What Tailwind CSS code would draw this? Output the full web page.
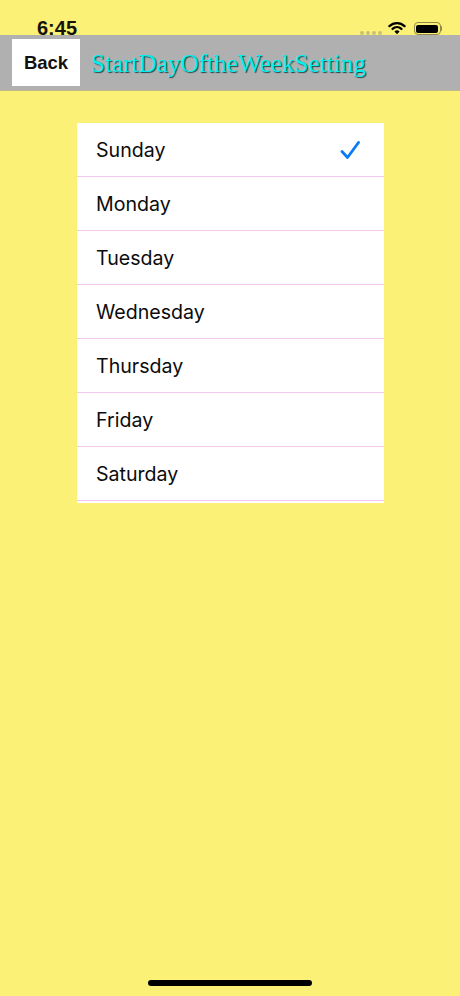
<!DOCTYPE html>
<html lang="en">
<head>
    <meta charset="UTF-8">
    <meta name="viewport" content="width=device-width, initial-scale=1.0">
    <title>StartDayOftheWeekSetting</title>
    <script src="https://cdn.jsdelivr.net/npm/@tailwindcss/browser@4"></script>
</head>
<body>
    <div class="relative w-[460px] h-[996px] overflow-hidden bg-[#fbf176] font-['Inter',sans-serif] flex flex-col">
        <!-- Status bar -->
        <div class="h-[35px] flex justify-between items-end pl-[37px] pr-[18px] relative z-10">
            <span class="text-[20px] leading-[20px] font-bold text-[#14140a] font-['Liberation_Sans',sans-serif] translate-y-[3px]">6:45</span>
            <div class="flex items-end">
                <div class="flex gap-[2px] mr-[6px]">
                    <span class="w-[4px] h-[4px] rounded-full bg-[#c9c275]"></span>
                    <span class="w-[4px] h-[4px] rounded-full bg-[#c9c275]"></span>
                    <span class="w-[4px] h-[4px] rounded-full bg-[#c9c275]"></span>
                    <span class="w-[4px] h-[4px] rounded-full bg-[#c9c275]"></span>
                </div>
                <svg width="18" height="14" viewBox="0 0 19 14" class="mr-[8px]">
                    <path d="M1.5 5 A11.5 11.5 0 0 1 17.5 5" fill="none" stroke="#000" stroke-width="2.4" stroke-linecap="round"/>
                    <path d="M4.8 8 A7 7 0 0 1 14.2 8" fill="none" stroke="#000" stroke-width="2.4" stroke-linecap="round"/>
                    <path d="M9.5 13.5 L6.8 10.6 A4 4 0 0 1 12.2 10.6 Z" fill="#000"/>
                </svg>
                <div class="flex items-center">
                    <div class="w-[27px] h-[13px] rounded-[4px] border border-[#8f8a45] p-[1.5px]">
                        <div class="w-full h-full rounded-[2px] bg-black"></div>
                    </div>
                    <div class="w-[1.5px] h-[5px] bg-[#8f8a45] rounded-r-sm"></div>
                </div>
            </div>
        </div>

        <!-- Nav bar -->
        <div class="h-[56px] bg-[#b0b0b0] border-b border-[#bfb98a] flex items-center pl-[12px]">
            <div class="w-[68px] h-[47px] bg-white flex items-center justify-center pt-[1px] text-[18.5px] font-bold text-[#111] font-['Liberation_Sans',sans-serif]">Back</div>
            <div class="ml-[11px] mt-[3px] text-[25.2px] leading-[30px] text-[#00f0ec] font-['Liberation_Serif',serif] [text-shadow:1px_1px_1px_#1a4448]">StartDayOftheWeekSetting</div>
        </div>

        <!-- Day list -->
        <div class="w-[307px] ml-[77px] mt-[32px] bg-white text-[19.6px] text-[#0c0c0c]">
            <div class="h-[54px] border-b border-[#f3c8ee] pl-[19px] pr-[24px] flex items-center justify-between">
                <span class="pt-[3px]">Sunday</span>
                <svg width="20" height="20" viewBox="0 0 20 20">
                    <path d="M2 11.5 L7.5 17.5 L18.5 2.5" fill="none" stroke="#0a7af5" stroke-width="2.8" stroke-linecap="round" stroke-linejoin="round"/>
                </svg>
            </div>
            <div class="h-[54px] border-b border-[#f3c8ee] pl-[19px] pt-[3px] flex items-center">Monday</div>
            <div class="h-[54px] border-b border-[#f3c8ee] pl-[19px] pt-[3px] flex items-center">Tuesday</div>
            <div class="h-[54px] border-b border-[#f3c8ee] pl-[19px] pt-[3px] flex items-center">Wednesday</div>
            <div class="h-[54px] border-b border-[#f3c8ee] pl-[19px] pt-[3px] flex items-center">Thursday</div>
            <div class="h-[54px] border-b border-[#f3c8ee] pl-[19px] pt-[3px] flex items-center">Friday</div>
            <div class="h-[54px] border-b border-[#f3c8ee] pl-[19px] pt-[3px] flex items-center">Saturday</div>
            <div class="h-[2px]"></div>
        </div>

        <!-- Home indicator -->
        <div class="absolute left-[148px] bottom-[10px] w-[164px] h-[6px] rounded-full bg-black"></div>
    </div>
</body>
</html>
